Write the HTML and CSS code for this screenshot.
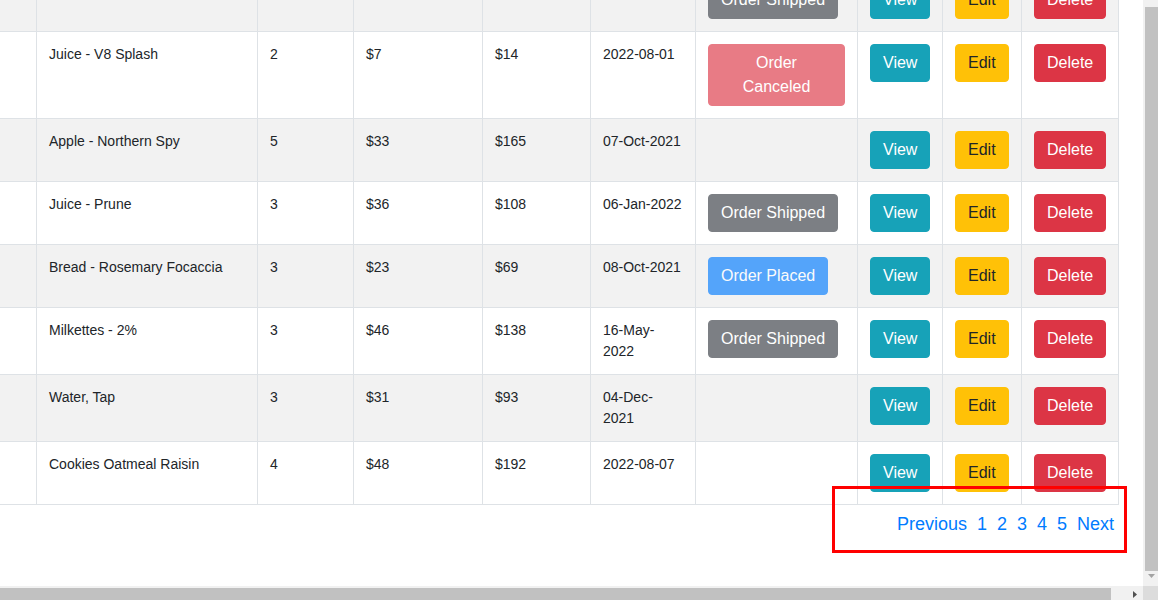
FILE: index.html
```html
<!DOCTYPE html>
<html lang="en">
<head>
<meta charset="utf-8">
<title>Orders</title>
<link rel="stylesheet" href="styles.css">
</head>
<body>
<div class="screen">
  <div class="main">
    <div class="content">
      <table class="orders">
        <colgroup>
          <col class="c-id"><col class="c-name"><col class="c-qty"><col class="c-price"><col class="c-total"><col class="c-date"><col class="c-status"><col class="c-view"><col class="c-edit"><col class="c-del">
        </colgroup>
        <tbody>
          <tr>
            <td></td><td></td><td></td><td></td><td></td><td></td>
            <td><button class="btn btn-gray">Order Shipped</button></td>
            <td><button class="btn btn-info">View</button></td>
            <td><button class="btn btn-warning">Edit</button></td>
            <td><button class="btn btn-danger">Delete</button></td>
          </tr>
          <tr>
            <td></td><td>Juice - V8 Splash</td><td>2</td><td>$7</td><td>$14</td><td>2022-08-01</td>
            <td><button class="btn btn-danger is-disabled">Order Canceled</button></td>
            <td><button class="btn btn-info">View</button></td>
            <td><button class="btn btn-warning">Edit</button></td>
            <td><button class="btn btn-danger">Delete</button></td>
          </tr>
          <tr>
            <td></td><td>Apple - Northern Spy</td><td>5</td><td>$33</td><td>$165</td><td>07-Oct-2021</td>
            <td></td>
            <td><button class="btn btn-info">View</button></td>
            <td><button class="btn btn-warning">Edit</button></td>
            <td><button class="btn btn-danger">Delete</button></td>
          </tr>
          <tr>
            <td></td><td>Juice - Prune</td><td>3</td><td>$36</td><td>$108</td><td>06-Jan-2022</td>
            <td><button class="btn btn-gray">Order Shipped</button></td>
            <td><button class="btn btn-info">View</button></td>
            <td><button class="btn btn-warning">Edit</button></td>
            <td><button class="btn btn-danger">Delete</button></td>
          </tr>
          <tr>
            <td></td><td>Bread - Rosemary Focaccia</td><td>3</td><td>$23</td><td>$69</td><td>08-Oct-2021</td>
            <td><button class="btn btn-primary is-disabled">Order Placed</button></td>
            <td><button class="btn btn-info">View</button></td>
            <td><button class="btn btn-warning">Edit</button></td>
            <td><button class="btn btn-danger">Delete</button></td>
          </tr>
          <tr>
            <td></td><td>Milkettes - 2%</td><td>3</td><td>$46</td><td>$138</td><td>16-May-2022</td>
            <td><button class="btn btn-gray">Order Shipped</button></td>
            <td><button class="btn btn-info">View</button></td>
            <td><button class="btn btn-warning">Edit</button></td>
            <td><button class="btn btn-danger">Delete</button></td>
          </tr>
          <tr>
            <td></td><td>Water, Tap</td><td>3</td><td>$31</td><td>$93</td><td>04-Dec-2021</td>
            <td></td>
            <td><button class="btn btn-info">View</button></td>
            <td><button class="btn btn-warning">Edit</button></td>
            <td><button class="btn btn-danger">Delete</button></td>
          </tr>
          <tr>
            <td></td><td>Cookies Oatmeal Raisin</td><td>4</td><td>$48</td><td>$192</td><td>2022-08-07</td>
            <td></td>
            <td><button class="btn btn-info">View</button></td>
            <td><button class="btn btn-warning">Edit</button></td>
            <td><button class="btn btn-danger">Delete</button></td>
          </tr>
        </tbody>
      </table>
      <nav class="pager">
        <a href="#" class="pager-link">Previous</a>
        <a href="#" class="pager-link">1</a>
        <a href="#" class="pager-link">2</a>
        <a href="#" class="pager-link">3</a>
        <a href="#" class="pager-link">4</a>
        <a href="#" class="pager-link">5</a>
        <a href="#" class="pager-link">Next</a>
      </nav>
    </div>
    <div class="annotation"></div>
  </div>
  <div class="vbar">
    <div class="vbar-thumb"></div>
    <svg class="vbar-arrow" width="7" height="4" viewBox="0 0 7 4"><polygon points="0,0 7,0 3.5,4" fill="#a3a3a3"/></svg>
  </div>
  <div class="hbar">
    <div class="hbar-thumb"></div>
    <svg class="hbar-arrow" width="4" height="7" viewBox="0 0 4 7"><polygon points="0,0 4,3.5 0,7" fill="#505050"/></svg>
  </div>
  <div class="corner"></div>
</div>
</body>
</html>
```
FILE: styles.css
```css
* { box-sizing: border-box; }

html, body {
  margin: 0;
  padding: 0;
  background: #fff;
}

body {
  font-family: "Liberation Sans", Arial, sans-serif;
  font-size: 14px;
  line-height: 21px;
  color: #212529;
}

.screen {
  display: grid;
  grid-template-columns: 1143px 15px;
  grid-template-rows: 586px 14px;
  width: 1158px;
  height: 600px;
  overflow: hidden;
}

.main {
  position: relative;
  overflow: hidden;
  background: #fff;
}

.content {
  width: 1159px;
  margin: -31px 0 0 -40px;
}

.orders {
  width: 1159px;
  table-layout: fixed;
  border-collapse: separate;
  border-spacing: 0;
}

.c-id { width: 77px; }
.c-name { width: 221px; }
.c-qty { width: 96px; }
.c-price { width: 129px; }
.c-total { width: 108px; }
.c-date { width: 105px; }
.c-status { width: 162px; }
.c-view { width: 85px; }
.c-edit { width: 79px; }
.c-del { width: 97px; }

.orders td {
  padding: 12px;
  vertical-align: top;
  text-align: left;
  border-right: 1px solid #dee2e6;
  border-bottom: 1px solid #dee2e6;
}

.orders tr:nth-child(odd) td {
  background: #f2f2f2;
}

.btn {
  display: inline-block;
  vertical-align: top;
  margin: 0;
  padding: 6px 12px;
  font-family: "Liberation Sans", Arial, sans-serif;
  font-size: 16px;
  line-height: 24px;
  border: 1px solid transparent;
  border-radius: 4px;
  text-align: center;
  color: #fff;
  cursor: pointer;
}

.btn-info { background: #17a2b8; border-color: #17a2b8; }
.btn-warning { background: #ffc107; border-color: #ffc107; color: #212529; }
.btn-danger { background: #dc3545; border-color: #dc3545; }
.btn-primary { background: #007bff; border-color: #007bff; }
.btn-gray { background: #7c7f84; border-color: #7c7f84; }
.is-disabled { opacity: 0.65; cursor: default; }

.pager {
  display: flex;
  justify-content: flex-end;
  padding-top: 6px;
}

.pager-link {
  padding: 0 5px;
  font-size: 18px;
  line-height: 27px;
  color: #007bff;
  text-decoration: none;
}

.annotation {
  position: absolute;
  left: 832px;
  top: 486px;
  width: 295px;
  height: 67px;
  border: 3px solid #ff0000;
}

.vbar {
  display: flex;
  flex-direction: column;
  align-items: flex-start;
  background: #f1f1f1;
  padding: 7px 0 0 2px;
}

.vbar-thumb {
  width: 13px;
  height: 564px;
  background: #c1c1c1;
}

.vbar-arrow {
  display: block;
  margin: 3px 0 0 3px;
}

.hbar {
  display: flex;
  align-items: flex-start;
  background: #f1f1f1;
  padding-top: 2px;
}

.hbar-thumb {
  width: 1111px;
  height: 12px;
  background: #c1c1c1;
}

.hbar-arrow {
  display: block;
  margin: 3px 0 0 22px;
}

.corner {
  background: #dcdcdc;
}
```
